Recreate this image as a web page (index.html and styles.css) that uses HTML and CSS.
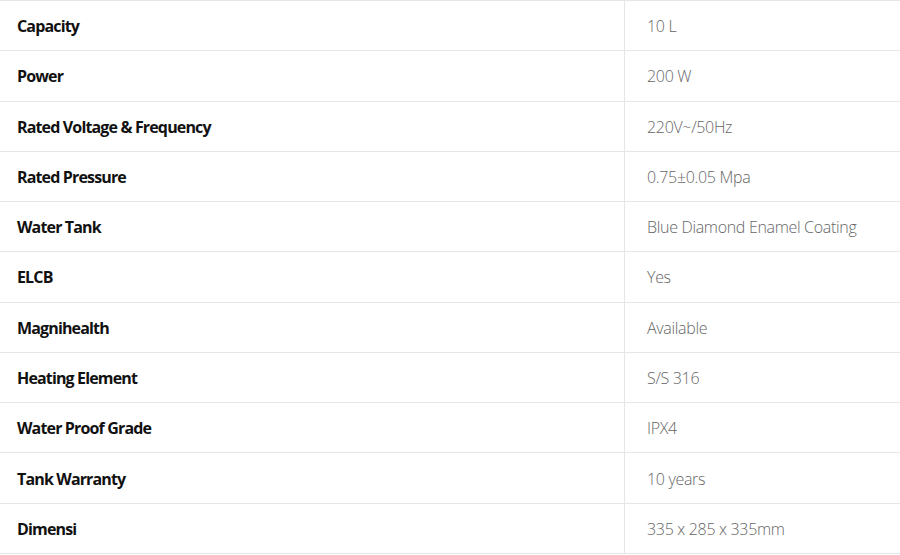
FILE: index.html
```html
<!DOCTYPE html>
<html>
<head>
<meta charset="utf-8">
<link rel="stylesheet" href="styles.css">
</head>
<body>
<table class="spec">
<tbody>
<tr><th>Capacity</th><td>10 L</td></tr>
<tr><th>Power</th><td>200 W</td></tr>
<tr><th>Rated Voltage &amp; Frequency</th><td>220V~/50Hz</td></tr>
<tr><th>Rated Pressure</th><td>0.75±0.05 Mpa</td></tr>
<tr><th>Water Tank</th><td>Blue Diamond Enamel Coating</td></tr>
<tr><th>ELCB</th><td>Yes</td></tr>
<tr><th>Magnihealth</th><td>Available</td></tr>
<tr><th>Heating Element</th><td>S/S 316</td></tr>
<tr><th>Water Proof Grade</th><td>IPX4</td></tr>
<tr><th>Tank Warranty</th><td>10 years</td></tr>
<tr><th>Dimensi</th><td>335 x 285 x 335mm</td></tr>
</tbody>
</table>
</body>
</html>
```
FILE: styles.css
```css
html, body {
  margin: 0;
  padding: 0;
  background: #fff;
}
.spec {
  width: 900px;
  border-collapse: collapse;
  font-family: "Open Sans", "Noto Sans", sans-serif;
  font-size: 16px;
}
.spec tr {
  height: 50.27px;
  border-top: 1px solid #e6e6e6;
  border-bottom: 1px solid #e6e6e6;
}
.spec th {
  width: 607px;
  text-align: left;
  font-weight: 700;
  color: #111;
  padding: 1px 0 0 17px;
  border-right: 1px solid #e6e6e6;
  letter-spacing: -0.85px;
}
.spec td {
  padding: 1px 0 0 22px;
  font-weight: 300;
  color: #666;
  letter-spacing: -0.32px;
}
```
